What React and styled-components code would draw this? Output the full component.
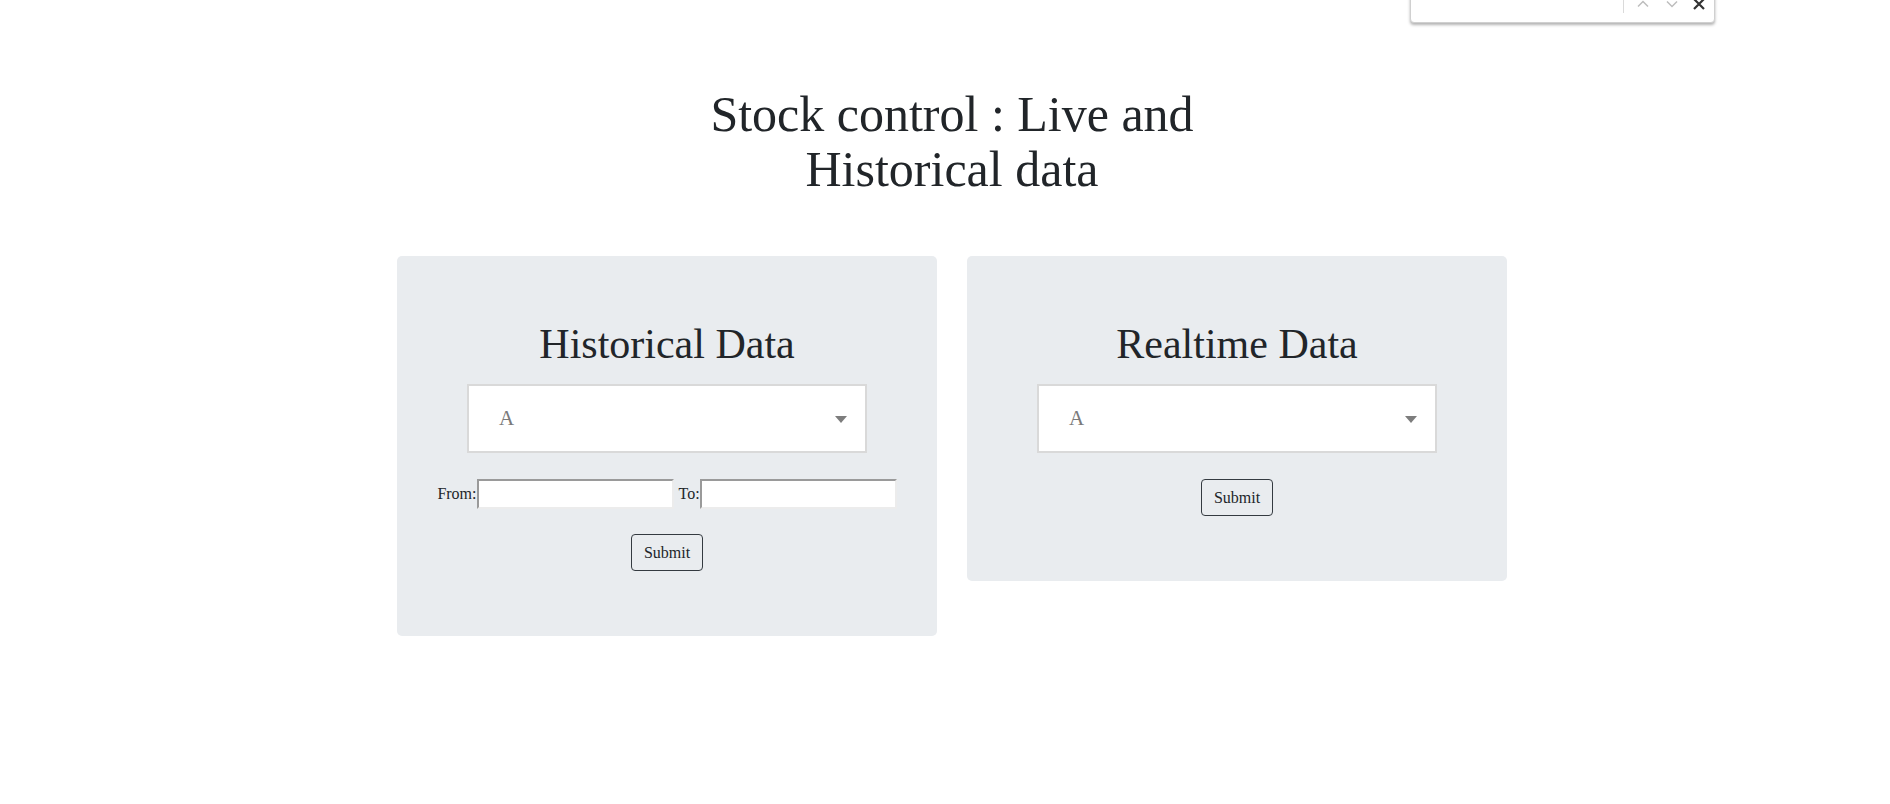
import styled, { createGlobalStyle } from "styled-components";

const GlobalStyle = createGlobalStyle`
  body {
    margin: 0;
    background: #fff;
    color: #212529;
    font-family: "Liberation Serif", "Times New Roman", serif;
  }
`;

// browser find bar peeking in at the top
const FindBar = styled.div`
  position: absolute;
  top: -17px;
  left: 1410px;
  width: 305px;
  height: 40px;
  box-sizing: border-box;
  background: #fff;
  border: 1px solid #d0d0d0;
  border-radius: 0 0 4px 4px;
  box-shadow: 0 2px 3px rgba(0, 0, 0, 0.3);
  display: flex;
  align-items: center;
  padding-left: 212px;
`;

const FindDivider = styled.span`
  width: 1px;
  height: 30px;
  margin-top: -10px;
  background: #dadada;
  margin-right: 12px;
`;

const FindIcon = styled.svg`
  width: 14px;
  height: 14px;
  margin-right: ${(p) => p.$gap || 0}px;
  margin-top: 2px;
`;

const Page = styled.main`
  padding: 87px 0 0 14px;
`;

const Header = styled.header`
  display: flex;
  justify-content: center;
`;

const Title = styled.h1`
  margin: 0;
  width: 560px;
  font-size: 50px;
  line-height: 55px;
  font-weight: 400;
  text-align: center;
`;

const CardRow = styled.section`
  display: flex;
  justify-content: center;
  align-items: flex-start;
  gap: 30px;
  margin-top: 59px;
`;

const Card = styled.div`
  width: 540px;
  box-sizing: border-box;
  background: #e9ecef;
  border-radius: 5px;
  padding: 63px 0 65px;
  display: flex;
  flex-direction: column;
  align-items: center;
`;

const CardTitle = styled.h2`
  margin: 0 0 15px;
  font-size: 42px;
  line-height: 50px;
  font-weight: 400;
  text-align: center;
`;

const Select = styled.div`
  width: 400px;
  height: 69px;
  box-sizing: border-box;
  background: #fff;
  border: 2px solid #d9d9d9;
  display: flex;
  align-items: center;
  justify-content: space-between;
  padding: 0 18px 0 30px;
  font-size: 21px;
  color: #7a7a7a;
`;

const Caret = styled.span`
  width: 0;
  height: 0;
  border-left: 6px solid transparent;
  border-right: 6px solid transparent;
  border-top: 7px solid #7d7d7d;
  margin-top: 2px;
`;

const DateRow = styled.div`
  display: flex;
  align-items: center;
  margin-top: 26px;
  font-size: 16px;
`;

const Label = styled.label`
  margin-left: ${(p) => p.$offset || 0}px;
`;

const DateInput = styled.input`
  width: 197px;
  height: 30px;
  box-sizing: border-box;
  background: #fff;
  border-style: solid;
  border-width: 2px;
  border-color: #9a9a9a #ececec #ececec #9a9a9a;
  padding: 0 4px;
  font-family: inherit;
`;

const SubmitButton = styled.button`
  margin-top: ${(p) => p.$top}px;
  width: 72px;
  height: 37px;
  background: transparent;
  border: 1px solid #343a40;
  border-radius: 4px;
  font-family: "Liberation Serif", "Times New Roman", serif;
  font-size: 16px;
  color: #212529;
  padding: 0;
`;

export default function App() {
  return (
    <>
      <GlobalStyle />
      <FindBar>
        <FindDivider />
        <FindIcon viewBox="0 0 14 14" $gap={15}>
          <path d="M2 9.5 L7 4.5 L12 9.5" fill="none" stroke="#bdbdbd" strokeWidth="1.5" />
        </FindIcon>
        <FindIcon viewBox="0 0 14 14" $gap={13}>
          <path d="M2 4.5 L7 9.5 L12 4.5" fill="none" stroke="#bdbdbd" strokeWidth="1.5" />
        </FindIcon>
        <FindIcon viewBox="0 0 14 14">
          <path d="M2 2 L12 12 M12 2 L2 12" fill="none" stroke="#333" strokeWidth="2.2" />
        </FindIcon>
      </FindBar>
      <Page>
        <Header>
          <Title>Stock control : Live and Historical data</Title>
        </Header>
        <CardRow>
          <Card>
            <CardTitle>Historical Data</CardTitle>
            <Select>
              <span>A</span>
              <Caret />
            </Select>
            <DateRow>
              <Label>From:</Label>
              <DateInput type="text" />
              <Label $offset={5}>To:</Label>
              <DateInput type="text" />
            </DateRow>
            <SubmitButton $top={25}>Submit</SubmitButton>
          </Card>
          <Card>
            <CardTitle>Realtime Data</CardTitle>
            <Select>
              <span>A</span>
              <Caret />
            </Select>
            <SubmitButton $top={26}>Submit</SubmitButton>
          </Card>
        </CardRow>
      </Page>
    </>
  );
}
